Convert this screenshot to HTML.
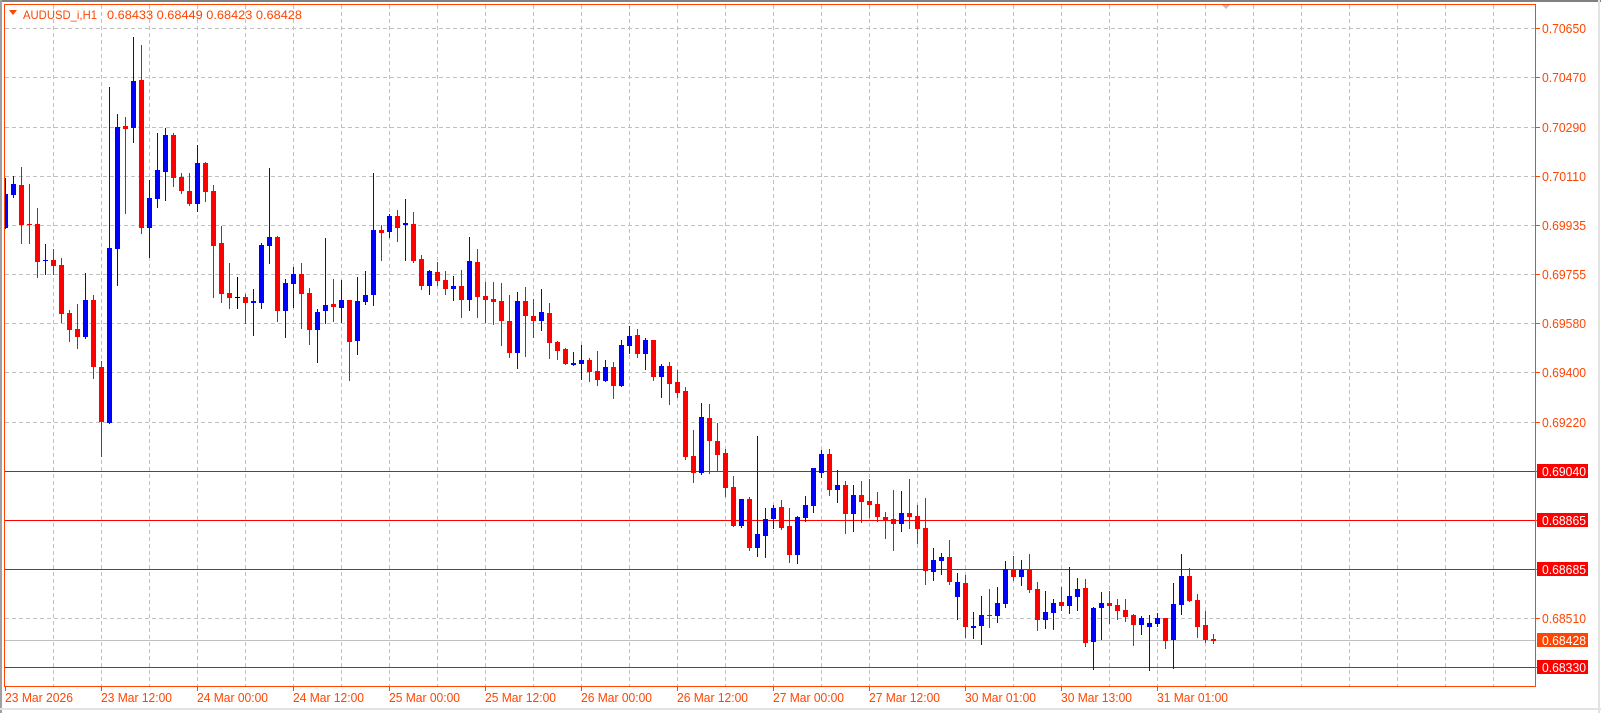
<!DOCTYPE html>
<html><head><meta charset="utf-8"><style>
html,body{margin:0;padding:0;background:#fff;}
svg{display:block;font-family:"Liberation Sans",sans-serif;}
</style></head><body>
<svg id="s" width="1601" height="713" viewBox="0 0 1601 713" xmlns="http://www.w3.org/2000/svg">
<rect x="0" y="0" width="1601" height="713" fill="#fff"/>
<rect x="0" y="0" width="1601" height="2" fill="#808080"/>
<rect x="0" y="0" width="2" height="713" fill="#a0a0a0"/>
<rect x="0" y="708" width="1601" height="2" fill="#e3e3e3"/>
<rect x="1598" y="0" width="2" height="713" fill="#e3e3e3"/>
<g id="grid" stroke="#c0c0c0" stroke-width="1" stroke-dasharray="4,3"></g>
<g id="lines"></g>
<g id="candles"></g>
<rect x="4.5" y="4.5" width="1531" height="682" fill="none" stroke="#ff4500" stroke-width="1"/>
<polygon points="1222,5 1230,5 1226,9" fill="#c0c0c0"/>
<polygon points="9,10 17,10 13,15" fill="#ff4500"/>
<text x="23" y="19" font-size="12" fill="#ff4500" textLength="74" lengthAdjust="spacingAndGlyphs">AUDUSD_i,H1</text>
<text x="107" y="19" font-size="12" fill="#ff4500" textLength="195" lengthAdjust="spacingAndGlyphs">0.68433 0.68449 0.68423 0.68428</text>
<g id="labels"></g>
</svg>
<script>
var NS="http://www.w3.org/2000/svg";
function el(p,t,a,txt){var e=document.createElementNS(NS,t);for(var k in a)e.setAttribute(k,a[k]);if(txt!==undefined)e.textContent=txt;document.getElementById(p).appendChild(e);return e;}
var prices=["0.70650","0.70470","0.70290","0.70110","0.69935","0.69755","0.69580","0.69400","0.69220","0.69040","0.68865","0.68685","0.68510","0.68330"];
var ys=[28,77,127,176,225,274,323,372,422,471,520,569,618,667];
var redIdx={9:1,10:1,11:1,13:1};
for(var i=0;i<ys.length;i++){
  if(!redIdx[i]) el("grid","line",{x1:5,x2:1536,y1:ys[i]+0.5,y2:ys[i]+0.5});
}
for(var x=53;x<1536;x+=48){el("grid","line",{x1:x+0.5,x2:x+0.5,y1:5,y2:686});}
[471,520,569,667].forEach(function(y){el("lines","rect",{x:5,y:y,width:1531,height:1,fill:"#ff0000"});});
el("lines","rect",{x:5,y:640,width:1531,height:1,fill:"#c0c0c0"});
for(var i=0;i<ys.length;i++){
  var y=ys[i];
  el("labels","rect",{x:1536,y:y,width:4,height:1,fill:"#ff4500"});
  if(redIdx[i]){
    el("labels","rect",{x:1537,y:y-7,width:51,height:14,fill:"#ff0000"});
    el("labels","text",{x:1542,y:y+5,"font-size":13,fill:"#fff",textLength:44,lengthAdjust:"spacingAndGlyphs"},prices[i]);
  } else {
    el("labels","text",{x:1542,y:y+5,"font-size":13,fill:"#ff4500",textLength:44,lengthAdjust:"spacingAndGlyphs"},prices[i]);
  }
}
el("labels","rect",{x:1537,y:633,width:51,height:14,fill:"#ff4500"});
el("labels","text",{x:1542,y:645,"font-size":13,fill:"#fff",textLength:44,lengthAdjust:"spacingAndGlyphs"},"0.68428");
var tl=["23 Mar 2026","23 Mar 12:00","24 Mar 00:00","24 Mar 12:00","25 Mar 00:00","25 Mar 12:00","26 Mar 00:00","26 Mar 12:00","27 Mar 00:00","27 Mar 12:00","30 Mar 01:00","30 Mar 13:00","31 Mar 01:00"];
for(var i=0;i<tl.length;i++){
  var tx=i==0?5:5+96*i;
  el("labels","rect",{x:tx,y:686,width:1,height:5,fill:"#ff4500"});
  el("labels","text",{x:tx,y:702,"font-size":13,fill:"#ff4500",textLength:i==0?68:71,lengthAdjust:"spacingAndGlyphs"},tl[i]);
}
var C=[
[194,228,178,228,'b'],[184,195,176,197,'b'],[185,225,167,243,'r'],[224,224,184,243,'r'],[224,262,208,277,'r'],
[260,260,244,274,'b'],[260,266,249,274,'r'],[265,314,258,322,'r'],[313,330,310,341,'r'],[329,337,304,348,'r'],
[300,337,273,338,'b'],[300,367,295,378,'r'],[367,422,361,456,'r'],[248,423,87,423,'b'],[127,249,114,285,'b'],
[126,129,117,213,'r'],[81,128,37,142,'b'],[80,228,45,233,'r'],[198,228,180,257,'b'],[170,199,133,207,'b'],
[135,172,128,200,'b'],[135,178,133,186,'r'],[177,191,173,193,'r'],[191,204,173,205,'r'],[163,204,145,211,'b'],
[163,192,162,201,'r'],[191,246,185,297,'r'],[243,294,226,302,'r'],[293,298,263,308,'r'],[297,297,277,308,'k'],
[297,303,294,323,'r'],[301,303,289,335,'b'],[245,303,243,308,'b'],[237,246,168,263,'b'],[237,311,236,321,'r'],
[283,311,279,337,'b'],[274,284,267,307,'b'],[274,294,263,328,'r'],[293,330,288,344,'r'],[312,330,309,362,'b'],
[305,311,238,323,'b'],[304,307,279,321,'r'],[300,308,280,322,'b'],[300,342,300,380,'r'],[301,341,277,354,'b'],
[295,302,271,304,'b'],[230,295,173,305,'b'],[230,233,225,260,'r'],[216,232,214,237,'b'],[216,228,210,241,'r'],
[223,225,199,260,'b'],[224,261,212,262,'r'],[259,286,255,289,'r'],[271,286,270,294,'b'],[272,281,262,285,'r'],
[280,289,271,294,'r'],[286,289,276,300,'b'],[286,300,270,317,'r'],[261,300,237,310,'b'],[262,297,249,317,'r'],
[296,300,282,322,'r'],[299,302,282,324,'r'],[301,321,283,345,'r'],[321,353,295,357,'r'],[301,353,292,368,'b'],
[301,316,287,356,'r'],[316,321,299,337,'r'],[312,321,289,330,'b'],[313,343,303,358,'r'],[342,351,341,359,'r'],
[349,364,348,364,'r'],[363,365,352,365,'b'],[360,364,345,379,'b'],[360,372,358,381,'r'],[371,380,351,385,'r'],
[367,381,360,381,'b'],[367,386,362,398,'r'],[345,386,340,386,'b'],[336,346,326,353,'b'],[335,354,329,357,'r'],
[340,354,338,369,'b'],[340,377,340,380,'r'],[366,377,364,397,'b'],[366,384,362,404,'r'],[382,393,370,397,'r'],
[391,457,387,459,'r'],[456,473,430,482,'r'],[417,473,403,474,'b'],[418,441,404,473,'r'],[441,455,423,471,'r'],
[453,488,449,496,'r'],[487,526,476,526,'r'],[499,526,499,527,'b'],[499,548,497,550,'r'],[534,548,436,556,'b'],
[519,536,508,557,'b'],[508,519,505,528,'b'],[507,528,500,529,'r'],[526,555,508,562,'r'],[517,555,516,563,'b'],
[505,518,496,521,'b'],[468,506,468,512,'b'],[454,473,450,477,'b'],[454,490,449,495,'r'],[485,490,470,502,'b'],
[485,514,481,533,'r'],[495,514,485,531,'b'],[495,502,481,522,'r'],[501,505,479,517,'r'],[504,517,492,521,'r'],
[517,520,512,538,'r'],[519,524,490,550,'r'],[513,524,491,531,'b'],[513,517,479,528,'r'],[516,529,505,543,'r'],
[528,571,498,584,'r'],[560,572,548,580,'b'],[557,561,553,574,'b'],[557,582,540,584,'r'],[582,597,573,619,'b'],
[583,627,575,637,'r'],[626,628,612,638,'b'],[615,626,596,644,'b'],[615,616,589,627,'r'],[603,616,587,622,'b'],
[569,604,561,607,'b'],[569,577,556,580,'r'],[570,577,560,585,'b'],[570,590,554,592,'r'],[589,620,582,630,'r'],
[612,620,591,628,'b'],[603,613,599,629,'b'],[602,606,587,610,'r'],[596,606,567,613,'b'],[589,597,578,610,'b'],
[588,643,579,646,'r'],[608,642,607,669,'b'],[603,608,592,639,'b'],[603,606,591,623,'r'],[605,611,599,619,'r'],
[610,617,599,621,'r'],[615,625,614,645,'r'],[618,625,616,634,'b'],[623,627,615,670,'b'],[618,624,613,626,'b'],
[618,641,618,648,'r'],[604,640,583,668,'b'],[576,605,554,614,'b'],[576,601,568,601,'r'],[600,627,594,637,'r'],
[625,640,611,642,'r'],[639,641,634,643,'r']
];
var col={r:"#ff0000",b:"#0000ff",k:"#000000"};
for(var k=0;k<C.length;k++){
  var c=C[k],f=col[c[4]];
  var wx=5+8*k,bx=3+8*k,bw=5;
  if(bx<5){bw-=5-bx;bx=5;}
  el("candles","rect",{x:wx,y:c[2],width:1,height:Math.max(1,c[3]-c[2]+1),fill:f});
  el("candles","rect",{x:bx,y:c[0],width:bw,height:Math.max(1,c[1]-c[0]),fill:f});
}
</script>
</body></html>
